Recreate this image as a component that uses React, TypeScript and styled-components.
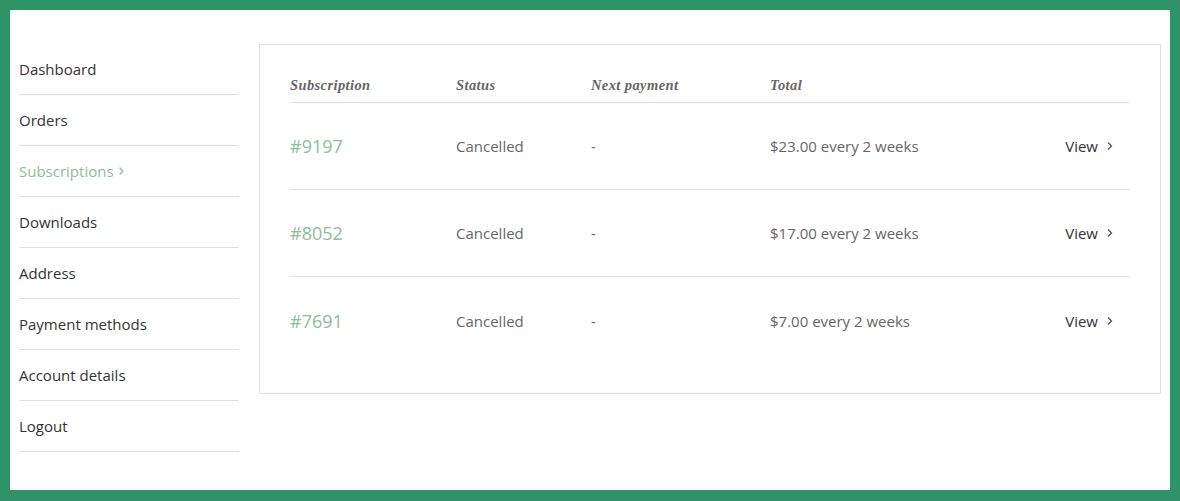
import { createGlobalStyle } from 'styled-components';
import styled from 'styled-components';

const GlobalStyle = createGlobalStyle`
  html, body {
    margin: 0;
    padding: 0;
    background: #2e9467;
  }
  * {
    box-sizing: border-box;
  }
`;

interface NavItem {
  label: string;
  active?: boolean;
}

interface SubscriptionRow {
  id: string;
  status: string;
  next: string;
  total: string;
}

const navItems: NavItem[] = [
  { label: 'Dashboard' },
  { label: 'Orders' },
  { label: 'Subscriptions', active: true },
  { label: 'Downloads' },
  { label: 'Address' },
  { label: 'Payment methods' },
  { label: 'Account details' },
  { label: 'Logout' },
];

const rows: SubscriptionRow[] = [
  { id: '#9197', status: 'Cancelled', next: '-', total: '$23.00 every 2 weeks' },
  { id: '#8052', status: 'Cancelled', next: '-', total: '$17.00 every 2 weeks' },
  { id: '#7691', status: 'Cancelled', next: '-', total: '$7.00 every 2 weeks' },
];

const columns = '166px 135px 179px 1fr auto';

export default function App() {
  return (
    <>
      <GlobalStyle />
      <Frame>
        <Page>
          <Sidebar>
            {navItems.map((item) => (
              <NavLink key={item.label} $active={item.active}>
                {item.label}
                {item.active && <NavChevron>›</NavChevron>}
              </NavLink>
            ))}
          </Sidebar>
          <Card>
            <HeaderRow>
              <HeadCell>Subscription</HeadCell>
              <HeadCell>Status</HeadCell>
              <HeadCell>Next payment</HeadCell>
              <HeadCell>Total</HeadCell>
              <HeadCell />
            </HeaderRow>
            {rows.map((row, i) => (
              <Row key={row.id} $last={i === rows.length - 1}>
                <OrderId>{row.id}</OrderId>
                <Cell>{row.status}</Cell>
                <Cell>{row.next}</Cell>
                <Cell>{row.total}</Cell>
                <ViewLink>
                  View
                  <svg width="8" height="10" viewBox="0 0 8 10" fill="none">
                    <path d="M2 1.5 L5.5 5 L2 8.5" stroke="#555" strokeWidth="1.3" />
                  </svg>
                </ViewLink>
              </Row>
            ))}
          </Card>
        </Page>
      </Frame>
    </>
  );
}

const Frame = styled.div`
  padding: 10px 10px 11px 10px;
  background: #2e9467;
  width: 1180px;
  height: 501px;
`;

const Page = styled.div`
  background: #fff;
  height: 100%;
  display: flex;
  align-items: flex-start;
  padding: 34px 9px 0 9px;
  gap: 20px;
  font-family: 'Open Sans', 'Liberation Sans', sans-serif;
`;

const Sidebar = styled.nav`
  width: 220px;
  display: flex;
  flex-direction: column;
`;

const NavLink = styled.a<{ $active?: boolean }>`
  display: flex;
  align-items: center;
  gap: 5px;
  height: 51px;
  padding-bottom: 1px;
  border-bottom: 1px solid #e0e0e0;
  font-size: 15px;
  color: ${({ $active }) => ($active ? '#8fbc99' : '#333')};
  cursor: pointer;
`;

const NavChevron = styled.span`
  font-size: 18px;
  line-height: 1;
  margin-top: -3px;
`;

const Card = styled.div`
  flex: 1;
  border: 1px solid #e2e2e2;
  padding: 29px 30px 29px 30px;
`;

const HeaderRow = styled.div`
  display: grid;
  grid-template-columns: ${columns};
  border-bottom: 1px solid #e0e0e0;
  height: 29px;
  align-items: center;
  padding-bottom: 6px;
`;

const HeadCell = styled.div`
  font-family: 'Liberation Serif', 'DejaVu Serif', serif;
  font-style: italic;
  font-weight: bold;
  font-size: 14.5px;
  letter-spacing: 0.4px;
  color: #666;
`;

const Row = styled.div<{ $last?: boolean }>`
  display: grid;
  grid-template-columns: ${columns};
  align-items: center;
  height: 87px;
  border-bottom: ${({ $last }) => ($last ? 'none' : '1px solid #e0e0e0')};
`;

const Cell = styled.div`
  font-size: 15px;
  color: #666;
`;

const OrderId = styled.a`
  font-size: 18px;
  color: #8fbc99;
  cursor: pointer;
`;

const ViewLink = styled.a`
  display: flex;
  align-items: center;
  gap: 8px;
  padding-right: 16px;
  font-size: 15px;
  color: #333;
  cursor: pointer;
`;
